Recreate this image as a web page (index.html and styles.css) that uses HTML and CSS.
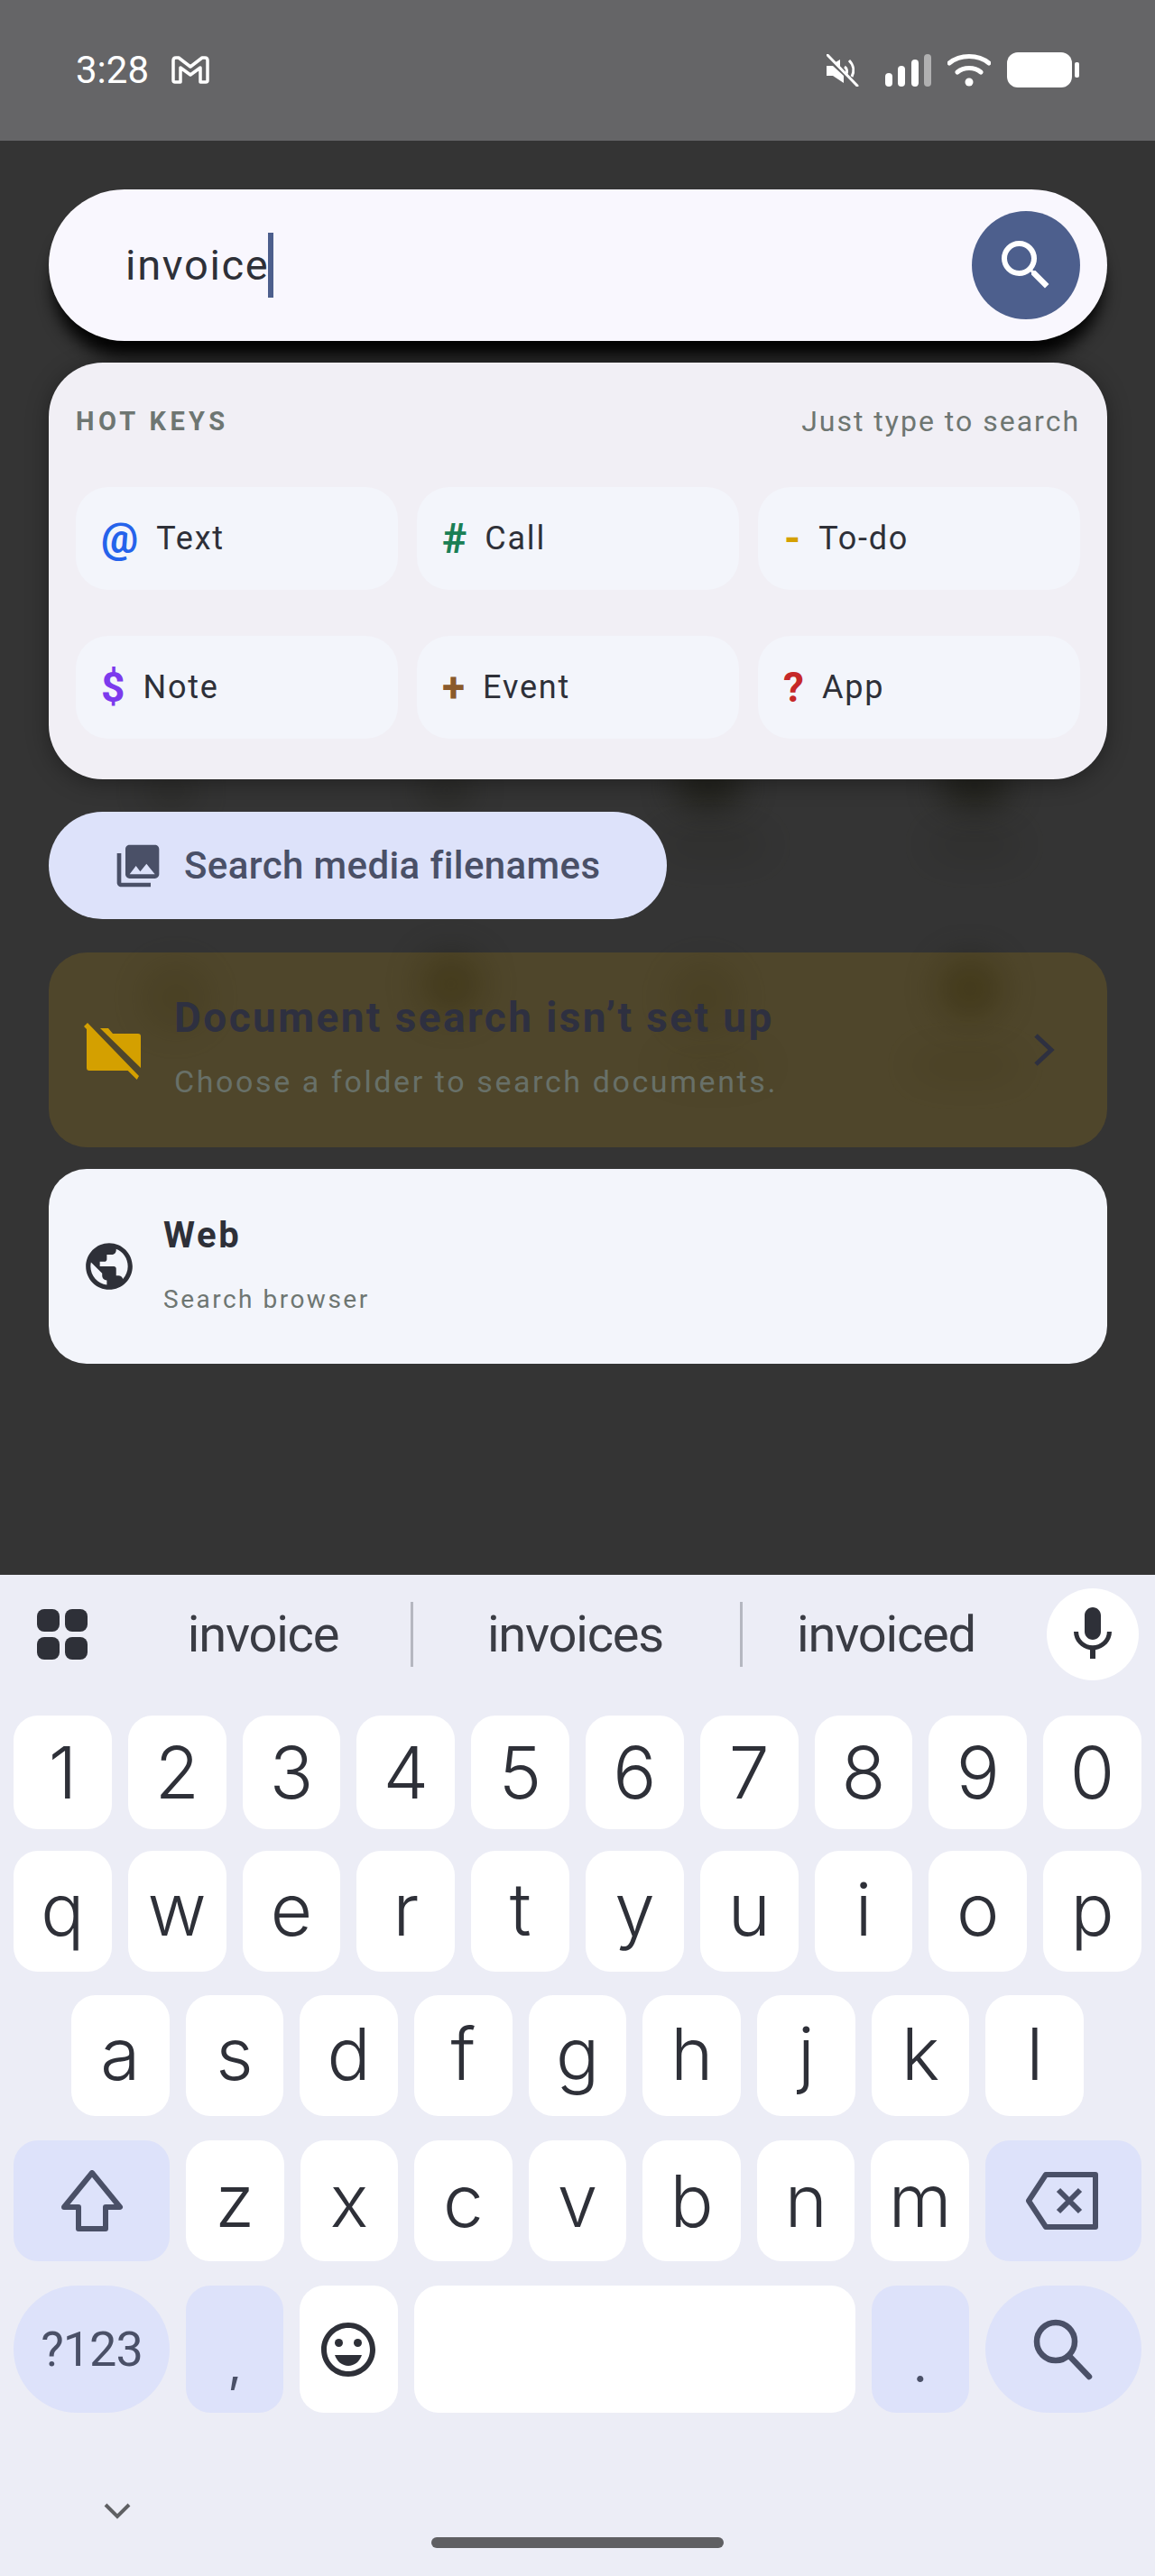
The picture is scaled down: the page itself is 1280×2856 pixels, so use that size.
FILE: index.html
```html
<!DOCTYPE html>
<html lang="en">
<head>
<meta charset="utf-8">
<title>Search</title>
<link rel="stylesheet" href="styles.css">
</head>
<body>
<div class="phone">
  <header class="status">
    <div class="status-left">
      <span class="time">3:28</span>
      <svg class="gmail" viewBox="0 0 42 31"><path d="M2 27V5Q2 2 5 2H8L21 12 34 2H37Q40 2 40 5V27Q40 29 38 29H32V13L21 21 10 13V29H4Q2 29 2 27Z" fill="none" stroke="#fff" stroke-width="3.500" stroke-linejoin="round"/></svg>
    </div>
    <div class="status-right">
      <svg class="mute" viewBox="0 0 36 36"><path d="M0 13H7L19 24V32L7 24H0Z" fill="#fff"/><path d="M10 9 15 6V14Z" fill="#fff"/><path d="M20 14C23 16 23 20 22 22M25 7C30 12 31 19 28 25" fill="none" stroke="#fff" stroke-width="3"/><path d="M1 1 34 35" stroke="#fff" stroke-width="3" stroke-linecap="round"/></svg>
      <svg class="signal" viewBox="0 0 52 36"><rect x="0" y="21" width="8" height="15" rx="4" fill="#fff"/><rect x="14" y="13" width="8" height="23" rx="4" fill="#fff"/><rect x="29" y="6" width="8" height="30" rx="4" fill="#fff"/><rect x="43" y="0" width="8" height="36" rx="4" fill="#b0b0b1"/></svg>
      <svg class="wifi" viewBox="0 0 48 36"><path d="M2 10C14 0 34 0 46 10M11 20C18 14 30 14 37 20" fill="none" stroke="#fff" stroke-width="5" stroke-linecap="round"/><circle cx="24" cy="31" r="4.500" fill="#fff"/></svg>
      <svg class="battery" viewBox="0 0 80 39"><rect x="0" y="0" width="72" height="39" rx="12" fill="#fff"/><rect x="75" y="11" width="5" height="17" rx="2" fill="#fff"/></svg>
    </div>
  </header>

  <main class="main">
    <div class="blob b1"></div><div class="blob b2"></div><div class="blob b3"></div><div class="blob b4"></div>
    <div class="blob b5"></div><div class="blob b6"></div><div class="blob b7"></div><div class="blob b8"></div>
    <div class="blob b9"></div><div class="blob b10"></div><div class="blob b11"></div><div class="blob b12"></div>

    <div class="searchbar">
      <div class="query"><span>invoice</span><i class="caret"></i></div>
      <div class="search-btn">
        <svg viewBox="0 0 24 24"><path d="M15.500 14h-.79l-.28-.27A6.471 6.471 0 0 0 16 9.500 6.500 6.500 0 1 0 9.500 16c1.610 0 3.090-.59 4.230-1.570l.27.28v.79l5 4.990L20.490 19l-4.990-5zm-6 0C7.010 14 5 11.990 5 9.500S7.010 5 9.500 5 14 7.010 14 9.500 11.990 14 9.500 14z" fill="#fff"/></svg>
      </div>
    </div>

    <section class="hotkeys">
      <div class="hot-head"><span class="hot-title">HOT KEYS</span><span class="hot-hint">Just type to search</span></div>
      <div class="hot-grid">
        <div class="chip"><b class="k k-at">@</b><span>Text</span></div>
        <div class="chip"><b class="k k-hash">#</b><span>Call</span></div>
        <div class="chip"><b class="k k-dash">-</b><span>To-do</span></div>
        <div class="chip"><b class="k k-dollar">$</b><span>Note</span></div>
        <div class="chip"><b class="k k-plus">+</b><span>Event</span></div>
        <div class="chip"><b class="k k-q">?</b><span>App</span></div>
      </div>
    </section>

    <div class="media">
      <svg viewBox="0 0 24 24"><path d="M22 16V4c0-1.100-.9-2-2-2H8c-1.100 0-2 .9-2 2v12c0 1.100.9 2 2 2h12c1.100 0 2-.9 2-2zm-11-4 2.030 2.710L16 11l4 5H8l3-4zM2 6v14c0 1.100.9 2 2 2h14v-2H4V6H2z" fill="#4a5067"/></svg>
      <span>Search media filenames</span>
    </div>

    <div class="card doc">
      <svg class="doc-icon" viewBox="0 -2 66 66"><path d="M0 3 4-1 61 58 58.700 62 48.700 52H6Q3 52 3 49V6Z" fill="#d4a000"/><path d="M18 5H27L32 11H60Q63 11 63 14V49Z" fill="#d4a000"/></svg>
      <div class="doc-text">
        <div class="doc-title">Document search isn’t set up</div>
        <div class="doc-sub">Choose a folder to search documents.</div>
      </div>
      <svg class="doc-chev" viewBox="0 0 24 36"><path d="M3 2 20 18 3 34" fill="none" stroke="#2e3040" stroke-width="5"/></svg>
    </div>

    <div class="card web">
      <svg class="web-icon" viewBox="0 0 24 24"><path d="M12 2C6.480 2 2 6.480 2 12s4.480 10 10 10 10-4.480 10-10S17.520 2 12 2zM4 12c0-.61.080-1.210.210-1.780L8.990 15v1c0 1.100.9 2 2 2v1.930C7.060 19.430 4 16.070 4 12zm13.890 5.400c-.26-.81-1-1.400-1.900-1.400h-1v-3c0-.55-.45-1-1-1h-6v-2h2c.55 0 1-.45 1-1V7h2c1.100 0 2-.9 2-2v-.410C17.920 5.770 20 8.650 20 12c0 2.080-.81 3.980-2.110 5.400z" fill="#2e3038"/></svg>
      <div class="web-text">
        <div class="web-title">Web</div>
        <div class="web-sub">Search browser</div>
      </div>
    </div>
  </main>

  <section class="keyboard">
    <div class="suggest">
      <svg class="grid-icon" viewBox="0 0 56 56"><rect x="0" y="0" width="25" height="25" rx="8" fill="#2e3038"/><rect x="31" y="0" width="25" height="25" rx="8" fill="#2e3038"/><rect x="0" y="31" width="25" height="25" rx="8" fill="#2e3038"/><rect x="31" y="31" width="25" height="25" rx="8" fill="#2e3038"/></svg>
      <span class="word w1">invoice</span><i class="divider"></i>
      <span class="word w2">invoices</span><i class="divider"></i>
      <span class="word w3">invoiced</span>
      <div class="mic">
        <svg viewBox="0 0 24 24"><path d="M12 14c1.660 0 3-1.340 3-3V5c0-1.660-1.340-3-3-3S9 3.340 9 5v6c0 1.660 1.340 3 3 3zm5.300-3c0 3-2.540 5.100-5.300 5.100S6.700 14 6.700 11H5c0 3.410 2.720 6.230 6 6.720V21h2v-3.280c3.280-.48 6-3.300 6-6.720h-1.700z" fill="#2e3038"/></svg>
      </div>
    </div>

    <div class="keys">
      <div class="row r1">
        <div class="key">1</div><div class="key">2</div><div class="key">3</div><div class="key">4</div><div class="key">5</div><div class="key">6</div><div class="key">7</div><div class="key">8</div><div class="key">9</div><div class="key">0</div>
      </div>
      <div class="row r2">
        <div class="key">q</div><div class="key">w</div><div class="key">e</div><div class="key">r</div><div class="key">t</div><div class="key">y</div><div class="key">u</div><div class="key">i</div><div class="key">o</div><div class="key">p</div>
      </div>
      <div class="row r3">
        <div class="key">a</div><div class="key">s</div><div class="key">d</div><div class="key">f</div><div class="key">g</div><div class="key">h</div><div class="key">j</div><div class="key">k</div><div class="key">l</div>
      </div>
      <div class="row r4">
        <div class="key wide alt">
          <svg class="shift" viewBox="0 0 70 68"><path d="M35 3 66 41H50V65H20V41H4Z" fill="none" stroke="#4a5067" stroke-width="6" stroke-linejoin="round"/></svg>
        </div>
        <div class="key">z</div><div class="key">x</div><div class="key">c</div><div class="key">v</div><div class="key">b</div><div class="key">n</div><div class="key">m</div>
        <div class="key wide alt">
          <svg class="backspace" viewBox="0 0 80 64"><path d="M22 3H77V61H22L3 32Z" fill="none" stroke="#4a5067" stroke-width="6" stroke-linejoin="round"/><path d="M36 20 60 44M60 20 36 44" stroke="#4a5067" stroke-width="6"/></svg>
        </div>
      </div>
      <div class="row r5">
        <div class="key wide alt pill sym">?123</div>
        <div class="key alt punct">,</div>
        <div class="key">
          <svg class="emoji" viewBox="0 0 24 24"><path d="M11.990 2C6.470 2 2 6.480 2 12s4.470 10 9.990 10C17.520 22 22 17.520 22 12S17.520 2 11.990 2zM12 20c-4.420 0-8-3.580-8-8s3.580-8 8-8 8 3.580 8 8-3.580 8-8 8z" fill="#2e3038"/><circle cx="8.500" cy="9.500" r="1.500" fill="#2e3038"/><circle cx="15.500" cy="9.500" r="1.500" fill="#2e3038"/><path d="M12 18c2.280 0 4.220-1.660 5-4H7c.78 2.340 2.720 4 5 4z" fill="#2e3038"/></svg>
        </div>
        <div class="key space"></div>
        <div class="key alt punct">.</div>
        <div class="key wide alt pill">
          <svg class="kb-search" viewBox="0 0 66 68"><circle cx="25" cy="25" r="21" fill="none" stroke="#4a5067" stroke-width="6.500"/><path d="M40 41 62 64" stroke="#4a5067" stroke-width="6.500" stroke-linecap="round"/></svg>
        </div>
      </div>
    </div>

    <div class="kb-foot">
      <svg class="hide-kb" viewBox="0 0 30 18"><path d="M2 2 15 15 28 2" fill="none" stroke="#5f6063" stroke-width="4"/></svg>
      <i class="handle"></i>
    </div>
  </section>
</div>
</body>
</html>
```
FILE: styles.css
```css
* { box-sizing: border-box; }
html, body { margin: 0; padding: 0; }
body { background: #343434; font-family: Roboto, "Liberation Sans", sans-serif; }
i { display: block; }

.phone { width: 1280px; height: 2856px; display: flex; flex-direction: column; overflow: hidden; }

/* status bar */
.status { height: 156px; background: #656567; display: flex; justify-content: space-between; align-items: flex-start; padding: 58px 84px 0 84px; flex: none; }
.status-left { display: flex; align-items: center; gap: 25px; height: 39px; }
.time { color: #fff; font-size: 42px; line-height: 39px; letter-spacing: 0; }
.gmail { width: 42px; height: 31px; display: block; }
.status-right { display: flex; align-items: center; height: 39px; }
.mute { width: 36px; height: 36px; margin-right: 29px; }
.signal { width: 52px; height: 36px; margin-right: 17px; }
.wifi { width: 48px; height: 36px; margin-right: 18px; }
.battery { width: 80px; height: 39px; }

/* main */
.main { height: 1590px; flex: none; position: relative; background: #343434; padding: 54px 53px 0 54px; display: flex; flex-direction: column; align-items: stretch; }
.blob { position: absolute; width: 70px; height: 70px; border-radius: 50%; background: #1a1a12; filter: blur(18px); opacity: .55; }
.b1 { left: 745px; top: 690px; opacity: .75; width: 80px; height: 50px; }
.b2 { left: 1040px; top: 690px; opacity: .75; width: 80px; height: 50px; }
.b3 { left: 465px; top: 700px; opacity: .4; width: 60px; height: 40px; }
.b4 { left: 160px; top: 700px; opacity: .3; width: 60px; height: 40px; }
.b5 { left: 465px; top: 900px; opacity: .5; }
.b6 { left: 1040px; top: 905px; opacity: .55; }
.b7 { left: 745px; top: 915px; opacity: .25; }
.b8 { left: 160px; top: 915px; opacity: .25; }
.b9 { left: 730px; top: 765px; width: 120px; height: 30px; opacity: .2; }
.b10 { left: 1030px; top: 765px; width: 100px; height: 30px; opacity: .2; }
.b11 { left: 730px; top: 1010px; width: 120px; height: 30px; opacity: .15; }
.b12 { left: 1010px; top: 1010px; width: 120px; height: 30px; opacity: .2; }

.searchbar, .hotkeys, .media, .card { position: relative; z-index: 1; }

.searchbar { height: 168px; border-radius: 84px; background: #f9f7fe; display: flex; align-items: center; justify-content: space-between; padding: 0 30px 0 85px; box-shadow: 0 22px 18px -5px rgba(0,0,0,.95); flex: none; }
.query { display: flex; align-items: center; color: #2e3038; font-size: 47px; line-height: 72px; letter-spacing: 1.7px; }
.caret { width: 6px; height: 72px; background: #4d5f8d; margin-left: -1px; }
.search-btn { width: 120px; height: 120px; border-radius: 50%; background: #4d5f8d; display: flex; align-items: center; justify-content: center; }
.search-btn svg { width: 72px; height: 72px; }

.hotkeys { margin-top: 24px; height: 462px; border-radius: 60px; background: #f1eff5; padding: 47px 30px 0 30px; box-shadow: 0 4px 24px rgba(0,0,0,.35); flex: none; }
.hot-head { display: flex; justify-content: space-between; align-items: center; height: 36px; }
.hot-title { font-size: 29px; font-weight: 700; letter-spacing: 4.4px; color: #6e7672; }
.hot-hint { font-size: 32px; letter-spacing: 2px; color: #6e7672; }
.hot-grid { margin-top: 55px; display: grid; grid-template-columns: repeat(3, 357px); grid-auto-rows: 114px; gap: 51px 21px; }
.chip { background: #f3f5fb; border-radius: 36px; display: flex; align-items: center; padding-left: 28px; gap: 20px; font-size: 36px; letter-spacing: 1.8px; color: #2e3038; }
.k { font-size: 46px; font-weight: 700; line-height: 1; letter-spacing: 0; }
.k-at { color: #2563eb; }
.k-hash { color: #1a7f55; }
.k-dash { color: #d4a000; margin-left: 1px; }
.k-dollar { color: #7c3aed; }
.k-plus { color: #8a5a2b; }
.k-q { color: #c62828; }

.media { margin-top: 36px; width: 685px; height: 119px; border-radius: 60px; background: #dde2fa; display: flex; align-items: center; padding-left: 71px; gap: 23px; color: #4a5067; font-size: 42px; font-weight: 500; letter-spacing: .4px; flex: none; }
.media svg { width: 56px; height: 56px; flex: none; }

.card { border-radius: 42px; display: flex; align-items: center; flex: none; }
.doc { margin-top: 37px; height: 216px; background: rgba(212,160,0,.17); padding: 0 58px 0 39px; }
.doc-icon { width: 66px; height: 66px; flex: none; margin-right: 34px; margin-top: 4px; }
.doc-text { flex: 1; margin-top: -6px; }
.doc-title { font-size: 46px; font-weight: 700; color: #2e3040; letter-spacing: 2.400px; line-height: 54px; }
.doc-sub { margin-top: 22px; font-size: 34px; color: #687068; letter-spacing: 2.600px; line-height: 44px; }
.doc-chev { width: 24px; height: 36px; flex: none; }

.web { margin-top: 24px; height: 216px; background: #f3f5fb; padding: 0 0 0 36px; }
.web-icon { width: 62px; height: 62px; flex: none; margin-right: 29px; }
.web-title { font-size: 40px; font-weight: 700; color: #2e3038; letter-spacing: 2.600px; line-height: 48px; margin-top: -4px; }
.web-sub { margin-top: 29px; font-size: 28px; color: #6e7672; letter-spacing: 2.500px; line-height: 36px; }

/* keyboard */
.keyboard { flex: 1; background: #ecedf6; display: flex; flex-direction: column; }
.suggest { height: 156px; display: flex; align-items: center; position: relative; flex: none; padding-bottom: 24px; }
.grid-icon { width: 56px; height: 56px; margin-left: 41px; flex: none; }
.word { font-size: 56px; color: #3a3c44; letter-spacing: -1.200px; flex: none; text-align: center; }
.w1 { width: 358px; padding-left: 31px; }
.w2 { width: 362px; padding-right: 3px; }
.w3 { width: 318px; }
.divider { width: 3px; height: 72px; background: #b5b7c0; flex: none; }
.mic { width: 102px; height: 102px; border-radius: 50%; background: #fff; display: flex; align-items: center; justify-content: center; flex: none; margin-left: 19px; }
.mic svg { width: 72px; height: 72px; }

.keys { display: flex; flex-direction: column; flex: none; }
.row { display: flex; gap: 18px; padding: 0 15px; }
.key { flex: 1 1 0; min-width: 0; background: #fff; border-radius: 27px; display: flex; align-items: center; justify-content: center; font-family: Inter, Roboto, sans-serif; font-size: 80px; font-weight: 350; color: #2e3038; line-height: 1; }
.r1 { height: 126px; }
.r2 { height: 134px; margin-top: 24px; }
.r3 { height: 134px; margin-top: 26px; padding: 0 79px; }
.r4 { height: 134px; margin-top: 27px; }
.r5 { height: 141px; margin-top: 27px; }
.r2 .key, .r3 .key { padding-bottom: 5px; }
.wide { flex: 0 0 173px; }
.alt { background: #dde2fa; color: #4a5067; }
.pill { border-radius: 71px; }
.sym { font-family: Roboto, sans-serif; font-size: 54px; font-weight: 400; letter-spacing: -1px; }
.punct { font-size: 54px; font-weight: 400; padding-top: 34px; }
.space { flex: 0 0 489px; }
.shift { width: 70px; height: 68px; }
.backspace { width: 80px; height: 64px; margin-right: 4px; }
.emoji { width: 72px; height: 72px; }
.kb-search { width: 66px; height: 68px; }

.kb-foot { flex: 1; position: relative; }
.hide-kb { position: absolute; left: 115px; top: 100px; width: 30px; height: 18px; }
.handle { position: absolute; left: 478px; top: 138px; width: 324px; height: 12px; border-radius: 6px; background: #5f5f62; }
```
